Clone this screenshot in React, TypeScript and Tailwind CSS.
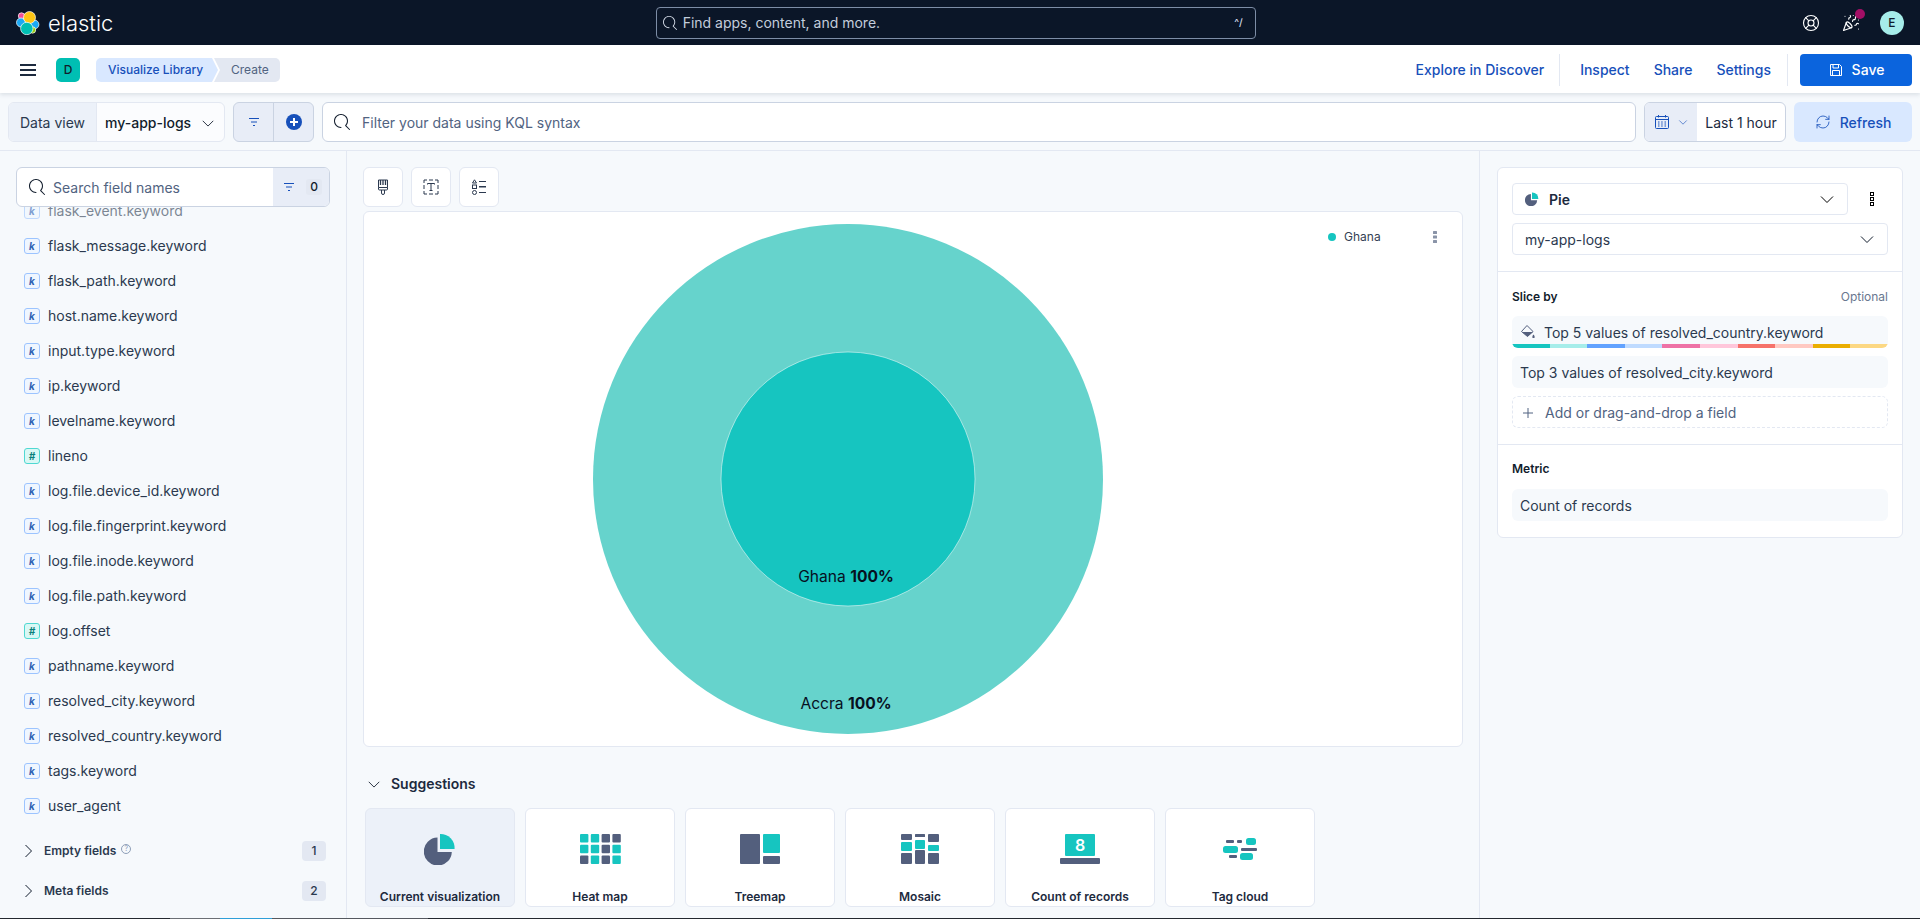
import { LifeBuoy, PartyPopper, RefreshCw } from "lucide-react";

const FIELDS: { name: string; type: "k" | "#" }[] = [
  { name: "flask_event.keyword", type: "k" },
  { name: "flask_message.keyword", type: "k" },
  { name: "flask_path.keyword", type: "k" },
  { name: "host.name.keyword", type: "k" },
  { name: "input.type.keyword", type: "k" },
  { name: "ip.keyword", type: "k" },
  { name: "levelname.keyword", type: "k" },
  { name: "lineno", type: "#" },
  { name: "log.file.device_id.keyword", type: "k" },
  { name: "log.file.fingerprint.keyword", type: "k" },
  { name: "log.file.inode.keyword", type: "k" },
  { name: "log.file.path.keyword", type: "k" },
  { name: "log.offset", type: "#" },
  { name: "pathname.keyword", type: "k" },
  { name: "resolved_city.keyword", type: "k" },
  { name: "resolved_country.keyword", type: "k" },
  { name: "tags.keyword", type: "k" },
  { name: "user_agent", type: "k" },
];

const PALETTE = [
  "bg-[#16c5c0]",
  "bg-[#a6edea]",
  "bg-[#61a2ff]",
  "bg-[#bfdbff]",
  "bg-[#ee72a6]",
  "bg-[#ffc7db]",
  "bg-[#f6726a]",
  "bg-[#ffc9c2]",
  "bg-[#eaae01]",
  "bg-[#fcd883]",
];

const DARK = "#535f7d";
const TEAL = "#16c5c0";

function SearchIcon({ size = 16, className = "text-[#111c2c]" }: { size?: number; className?: string }) {
  return (
    <svg width={size} height={size} viewBox="0 0 16 16" fill="currentColor" className={`shrink-0 ${className}`}>
      <path d="M11.271 11.978l3.872 3.873a.502.502 0 00.708 0 .502.502 0 000-.708l-3.565-3.564c2.38-2.747 2.267-6.923-.342-9.532-2.73-2.73-7.17-2.73-9.898 0-2.728 2.729-2.728 7.17 0 9.9a6.955 6.955 0 004.949 2.05.5.5 0 000-1 5.96 5.96 0 01-4.242-1.757 6.01 6.01 0 010-8.486c2.337-2.34 6.143-2.34 8.484 0a6.01 6.01 0 010 8.486.5.5 0 00.034.738z" />
    </svg>
  );
}

function ChevronDown({ size = 16, className = "text-[#111c2c]" }: { size?: number; className?: string }) {
  return (
    <svg width={size} height={size} viewBox="0 0 16 16" fill="none" stroke="currentColor" className={`shrink-0 ${className}`}>
      <path d="M2 5.5l6 6 6-6" />
    </svg>
  );
}

function ChevronRight() {
  return (
    <svg width="16" height="16" viewBox="0 0 16 16" fill="none" stroke="currentColor" className="-ml-1 shrink-0 text-[#111c2c]">
      <path d="M5.5 2l6 6-6 6" />
    </svg>
  );
}

function FilterIcon() {
  return (
    <svg width="16" height="16" viewBox="0 0 16 16" fill="none" stroke="currentColor" className="shrink-0 text-[#1750ba]">
      <path d="M3 4.5h10M5 8h6M7 11.5h2" />
    </svg>
  );
}

function BoxesVertical({ className = "text-[#111c2c]" }: { className?: string }) {
  return (
    <svg width="16" height="16" viewBox="0 0 16 16" fill="none" stroke="currentColor" className={`shrink-0 ${className}`}>
      <rect x="6.5" y="1.5" width="3" height="3" />
      <rect x="6.5" y="6.5" width="3" height="3" />
      <rect x="6.5" y="11.5" width="3" height="3" />
    </svg>
  );
}

function ElasticLogo() {
  return (
    <svg width="24" height="24" viewBox="0 0 24 24" className="shrink-0">
      <circle cx="5.5" cy="5" r="3.2" fill="#f04e98" stroke="#fff" strokeWidth="0.7" />
      <circle cx="18.5" cy="13.5" r="4.4" fill="#1ba9f5" stroke="#fff" strokeWidth="0.7" />
      <circle cx="16.5" cy="19" r="3.2" fill="#93c90e" stroke="#fff" strokeWidth="0.7" />
      <circle cx="5" cy="11.5" r="4.5" fill="#1ba9f5" stroke="#fff" strokeWidth="0.7" />
      <circle cx="13.5" cy="6.5" r="6" fill="#fec514" stroke="#fff" strokeWidth="0.7" />
      <circle cx="10.8" cy="17.5" r="6.2" fill="#00bfb3" stroke="#fff" strokeWidth="0.7" />
    </svg>
  );
}

function PieGlyph({ size }: { size: number }) {
  return (
    <svg width={size} height={size} viewBox="0 0 32 32" className="shrink-0">
      <path d="M13.5 4.5v14.4h14.3A14 14 0 1 1 13.5 4.5z" fill={DARK} />
      <path d="M16 1a14 14 0 0 1 14.6 15H16z" fill={TEAL} />
    </svg>
  );
}

function HeatMapGlyph() {
  const pattern = [1, 1, 0, 0, 1, 1, 0, 1, 0, 1, 0, 1];
  return (
    <svg width="41" height="30" viewBox="0 0 41 30">
      {pattern.map((on, i) => (
        <rect
          key={i}
          x={(i % 4) * 10.8}
          y={Math.floor(i / 4) * 10.8}
          width="8.4"
          height="8.4"
          rx="1"
          fill={on ? TEAL : DARK}
        />
      ))}
    </svg>
  );
}

function TreemapGlyph() {
  return (
    <svg width="40" height="30" viewBox="0 0 40 30">
      <rect x="0" y="0" width="20" height="30" rx="1" fill={DARK} />
      <rect x="23" y="0" width="17" height="19" rx="1" fill={TEAL} />
      <rect x="23" y="22" width="17" height="8" rx="1" fill={DARK} />
    </svg>
  );
}

function MosaicGlyph() {
  return (
    <svg width="38" height="30" viewBox="0 0 38 30">
      <rect x="0" y="0" width="11" height="6" rx="1" fill={DARK} />
      <rect x="0" y="8" width="11" height="9" rx="1" fill={TEAL} />
      <rect x="0" y="19" width="11" height="11" rx="1" fill={DARK} />
      <rect x="14" y="0" width="10" height="3" rx="0.5" fill={DARK} />
      <rect x="14" y="6" width="10" height="9" rx="1" fill={TEAL} />
      <rect x="14" y="16" width="10" height="14" rx="1" fill={DARK} />
      <rect x="27" y="0" width="11" height="8" rx="1" fill={DARK} />
      <rect x="27" y="11" width="11" height="6" rx="1" fill={TEAL} />
      <rect x="27" y="19" width="11" height="11" rx="1" fill={DARK} />
    </svg>
  );
}

function CountGlyph() {
  return (
    <svg width="40" height="30" viewBox="0 0 40 30">
      <rect x="5" y="0" width="30" height="22" rx="1" fill={TEAL} />
      <rect x="0" y="24" width="40" height="6" rx="1" fill={DARK} />
      <text x="20" y="17" textAnchor="middle" fontSize="16" fontWeight="600" fill="#fff" fontFamily="Inter, sans-serif">
        8
      </text>
    </svg>
  );
}

function TagCloudGlyph() {
  return (
    <svg width="34" height="22" viewBox="0 0 34 22">
      <rect x="3" y="2" width="8" height="3" rx="1" fill={DARK} />
      <rect x="14" y="2" width="5" height="3" rx="1" fill={DARK} />
      <rect x="23" y="0" width="10" height="7" rx="2.5" fill={TEAL} />
      <rect x="0" y="8" width="15" height="7" rx="2.5" fill={TEAL} />
      <rect x="18" y="10" width="16" height="3" rx="1" fill={DARK} />
      <rect x="6" y="17" width="8" height="3" rx="1" fill={DARK} />
      <rect x="17" y="15" width="13" height="7" rx="2.5" fill={TEAL} />
    </svg>
  );
}

const SUGGESTIONS = [
  { label: "Current visualization", icon: <PieGlyph size={32} />, active: true },
  { label: "Heat map", icon: <HeatMapGlyph />, active: false },
  { label: "Treemap", icon: <TreemapGlyph />, active: false },
  { label: "Mosaic", icon: <MosaicGlyph />, active: false },
  { label: "Count of records", icon: <CountGlyph />, active: false },
  { label: "Tag cloud", icon: <TagCloudGlyph />, active: false },
];

function FieldIcon({ type }: { type: "k" | "#" }) {
  const tone =
    type === "k"
      ? "border-[#9cc4ff] bg-[#eff6ff] text-[#2f63b3]"
      : "border-[#4fd8d2] bg-[#d9f8f5] text-[#0b7f7b]";
  return (
    <span className={`flex h-4 w-4 shrink-0 items-center justify-center rounded-[3px] border text-[10px] font-bold italic leading-none ${tone}`}>
      {type}
    </span>
  );
}

function TopBar() {
  return (
    <header className="flex h-[45px] shrink-0 items-center bg-[#0b1628] pl-4 pr-4">
      <ElasticLogo />
      <span className="ml-[8px] text-[22px] font-light leading-none text-white">elastic</span>
      <div className="mx-auto flex h-8 w-[600px] -translate-x-[2px] items-center gap-[6px] rounded-[4px] border border-[#7d8da6] bg-[#0b1628] pl-[6px] pr-3">
        <SearchIcon size={14} className="text-[#d5dce8]" />
        <span className="text-sm text-[#c3cddc]">Find apps, content, and more.</span>
        <span className="ml-auto text-[10px] font-medium text-[#d5dce8]">^/</span>
      </div>
      <div className="flex items-center">
        <LifeBuoy size={18} strokeWidth={1.5} className="text-white" />
        <div className="relative ml-[22px] mr-[20px]">
          <PartyPopper size={18} strokeWidth={1.5} className="text-white" />
          <span className="absolute -right-[5px] -top-[5px] h-[10px] w-[10px] rounded-full bg-[#a30f66]" />
        </div>
        <span className="flex h-6 w-6 items-center justify-center rounded-full bg-[#a6edea] text-xs font-medium text-[#111c2c]">
          E
        </span>
      </div>
    </header>
  );
}

function NavBar() {
  return (
    <nav className="relative z-20 flex h-12 shrink-0 items-center bg-white pl-5 pr-2 pt-[2px] shadow-[0_2px_4px_rgba(43,57,79,0.12)]">
      <div className="flex h-4 w-4 flex-col justify-between py-[2px]">
        <span className="h-[2px] bg-[#1d2a3e]" />
        <span className="h-[2px] bg-[#1d2a3e]" />
        <span className="h-[2px] bg-[#1d2a3e]" />
      </div>
      <span className="ml-5 flex h-6 w-6 items-center justify-center rounded-[5px] bg-[#00bfb3] text-xs font-medium text-[#111c2c]">
        D
      </span>
      <div className="ml-4 flex h-6 text-xs">
        <span className="flex w-[122px] items-center rounded-l-[5px] bg-[#d9e8ff] pl-3 font-medium text-[#1750ba] [clip-path:polygon(0_0,116px_0,100%_50%,116px_100%,0_100%)]">
          Visualize Library
        </span>
        <span className="-ml-[4px] flex w-[66px] items-center rounded-r-[5px] bg-[#e3e8f2] pl-[17px] text-[#516381] [clip-path:polygon(0_0,100%_0,100%_100%,0_100%,6px_50%)]">
          Create
        </span>
      </div>
      <div className="ml-auto flex items-center text-sm font-medium text-[#1750ba]">
        <span>Explore in Discover</span>
        <span className="mx-[15px] h-8 w-px bg-[#e3e8f2]" />
        <span className="ml-[5px]">Inspect</span>
        <span className="ml-6">Share</span>
        <span className="ml-6">Settings</span>
        <span className="ml-4 mr-3 h-8 w-px bg-[#e3e8f2]" />
        <button className="flex h-8 w-28 items-center justify-center gap-2 rounded-[4px] bg-[#0b64dd] font-medium text-white">
          <svg width="16" height="16" viewBox="0 0 16 16" fill="none" stroke="currentColor">
            <path d="M2.5 2.5h9l2 2v9h-11z" />
            <path d="M5 2.5v3.5h5.5v-3.5M4.5 13.5v-5h7v5" />
          </svg>
          Save
        </button>
      </div>
    </nav>
  );
}

function FilterBar() {
  return (
    <div className="flex h-[58px] shrink-0 items-start gap-2 border-b border-[#e3e8f2] bg-[#f6f9fc] pl-2 pr-2 pt-[9px] text-sm">
      <div className="flex h-10 w-[217px] items-stretch overflow-hidden rounded-md border border-[#e3e8f2] bg-white/50">
        <span className="flex w-[88px] items-center justify-center border-r border-[#e3e8f2] bg-[#ecf1f9] pt-px text-[#2b394f]">
          Data view
        </span>
        <span className="flex flex-1 items-center gap-[10px] pl-2 pt-px font-medium text-[#111c2c]">
          my-app-logs
          <ChevronDown size={14} />
        </span>
      </div>
      <div className="flex h-10 w-[81px] overflow-hidden rounded-md border border-[#cad3e2] bg-[#e8edf7]">
        <span className="flex w-10 items-center justify-center border-r border-[#cad3e2]">
          <FilterIcon />
        </span>
        <span className="flex flex-1 items-center justify-center">
          <span className="relative flex h-4 w-4 items-center justify-center rounded-full bg-[#1750ba]">
            <span className="absolute h-[2px] w-2 bg-white" />
            <span className="absolute h-2 w-[2px] bg-white" />
          </span>
        </span>
      </div>
      <div className="flex h-10 flex-1 items-center gap-3 rounded-md border border-[#cad3e2] bg-white pl-[11px]">
        <SearchIcon />
        <span className="pt-px text-[#516381]">Filter your data using KQL syntax</span>
      </div>
      <div className="flex h-10 w-[142px] overflow-hidden rounded-md border border-[#cad3e2] bg-white">
        <span className="flex w-[52px] items-center gap-[8px] bg-[#e8edf7] pl-[9px]">
          <svg width="16" height="16" viewBox="0 0 16 16" fill="none" stroke="#1750ba" className="shrink-0">
            <rect x="1.5" y="2.5" width="13" height="12" rx="1" />
            <path d="M1.5 5.5h13M4.5 1v2.5M11.5 1v2.5" />
            <path d="M4 8h1.5M7.2 8h1.5M10.5 8h1.5M4 10h1.5M7.2 10h1.5M10.5 10h1.5M4 12h1.5M7.2 12h1.5M10.5 12h1.5" />
          </svg>
          <ChevronDown size={10} className="text-[#1750ba]" />
        </span>
        <span className="flex flex-1 items-center justify-center pt-px text-[#1d2a3e]">Last 1 hour</span>
      </div>
      <button className="flex h-10 w-[118px] items-center justify-center gap-[9px] rounded-md bg-[#d9e8ff] font-medium text-[#1750ba]">
        <RefreshCw size={16} strokeWidth={1.25} />
        <span className="pt-px">Refresh</span>
      </button>
    </div>
  );
}

function Sidebar() {
  return (
    <aside className="flex w-[347px] shrink-0 flex-col border-r border-[#e3e8f2]">
      <div className="relative z-10 px-4 pt-4">
        <div className="flex h-10 overflow-hidden rounded-md border border-[#cad3e2] bg-white">
          <div className="flex flex-1 items-center gap-2 pl-[12px]">
            <SearchIcon />
            <span className="pt-px text-sm text-[#516381]">Search field names</span>
          </div>
          <div className="flex w-14 items-center gap-[9px] bg-[#e8edf7] pl-2">
            <FilterIcon />
            <span className="flex h-4 w-4 items-center justify-center rounded-[3px] bg-[#e3e8f2] text-xs font-medium text-[#111c2c]">
              0
            </span>
          </div>
        </div>
      </div>
      <div className="min-h-0 flex-1 overflow-hidden">
        <ul className="-mt-[14px] px-6">
          {FIELDS.map((field, i) => (
            <li key={field.name} className={`flex h-[35px] items-center gap-2 text-sm text-[#2b394f] ${i === 0 ? "opacity-60" : ""}`}>
              <FieldIcon type={field.type} />
              {field.name}
            </li>
          ))}
        </ul>
      </div>
      <div className="px-6 pb-[7px]">
        <div className="flex h-10 items-center">
          <ChevronRight />
          <span className="ml-2 text-xs font-semibold text-[#2b394f]">Empty fields</span>
          <span className="-mt-[5px] ml-[5px] flex h-[10px] w-[10px] items-center justify-center rounded-full border border-[#8e9fb8] text-[7px] leading-none text-[#8e9fb8]">
            ?
          </span>
          <span className="ml-auto -mr-[4px] flex h-5 w-6 items-center justify-center rounded-[4px] bg-[#e3e8f2] text-xs font-medium text-[#2b394f]">
            1
          </span>
        </div>
        <div className="flex h-10 items-center">
          <ChevronRight />
          <span className="ml-2 text-xs font-semibold text-[#2b394f]">Meta fields</span>
          <span className="ml-auto -mr-[4px] flex h-5 w-6 items-center justify-center rounded-[4px] bg-[#e3e8f2] text-xs font-medium text-[#2b394f]">
            2
          </span>
        </div>
      </div>
    </aside>
  );
}

function ToolButton({ children }: { children: React.ReactNode }) {
  return (
    <button className="flex h-10 w-10 items-center justify-center rounded-md border border-[#e3e8f2] bg-white text-[#2b394f]">
      {children}
    </button>
  );
}

function Workspace() {
  return (
    <main className="flex min-w-0 flex-1 flex-col px-4 pt-4">
      <div className="flex gap-2">
        <ToolButton>
          <svg width="16" height="16" viewBox="0 0 16 16" fill="none" stroke="currentColor">
            <path d="M3.5 1h9v7.5h-9z" />
            <path d="M5.5 1v5M8 1v5M10.5 1v5" strokeWidth="1.3" />
            <path d="M3.5 8.5v1.5a1 1 0 001 1h7a1 1 0 001-1V8.5" />
            <path d="M6.5 11v3a1.5 1.5 0 003 0v-3" />
          </svg>
        </ToolButton>
        <ToolButton>
          <svg width="16" height="16" viewBox="0 0 16 16" fill="none" stroke="currentColor">
            <path d="M1 4V1h3M6 1h4M12 1h3v3M15 6v4M15 12v3h-3M10 15H6M4 15H1v-3M1 10V6" />
            <path d="M4.5 5.5V4.5h7v1M8 4.5v7M6.5 11.5h3" />
          </svg>
        </ToolButton>
        <ToolButton>
          <svg width="16" height="16" viewBox="0 0 16 16" fill="none" stroke="currentColor">
            <path d="M3.5 .8L5.5 4h-4z" />
            <rect x="1.5" y="6" width="4" height="3.5" />
            <circle cx="3.5" cy="13.5" r="2" />
            <path d="M8 2.5h7" />
            <path d="M8 7.75h7" strokeWidth="1.5" />
            <path d="M8 13.5h7" />
          </svg>
        </ToolButton>
      </div>
      <section className="mt-1 flex min-h-0 flex-1 rounded-md border border-[#e3e8f2] bg-white">
        <div className="flex min-w-0 flex-1 items-center justify-center">
          <svg width="512" height="512" viewBox="0 0 512 512" className="shrink-0" fontFamily="Inter, sans-serif">
            <circle cx="256" cy="256" r="255" fill="#66d3cc" />
            <circle cx="256" cy="256" r="127" fill="#16c5c0" stroke="#fff" strokeWidth="0.5" />
            <text x="254" y="355" textAnchor="middle" dominantBaseline="middle" fontSize="15.6" fill="#07101f">
              Ghana <tspan fontWeight="700">100%</tspan>
            </text>
            <text x="254" y="482" textAnchor="middle" dominantBaseline="middle" fontSize="15.6" fill="#07101f">
              Accra <tspan fontWeight="700">100%</tspan>
            </text>
          </svg>
        </div>
        <div className="flex h-[50px] w-[130px] shrink-0 items-center text-xs text-[#343f54]">
          <span className="-ml-[4px] h-2 w-2 rounded-full bg-[#16c5c0]" />
          <span className="ml-2">Ghana</span>
          <svg width="4" height="12" viewBox="0 0 4 12" className="ml-auto mr-[25px] shrink-0" fill="#8a94a8">
            <rect x="0" y="0" width="4" height="3" rx="0.5" />
            <rect x="0" y="4.5" width="4" height="3" rx="0.5" />
            <rect x="0" y="9" width="4" height="3" rx="0.5" />
          </svg>
        </div>
      </section>
      <div className="flex h-[49px] shrink-0 items-end">
        <div className="flex h-6 items-center gap-[10px] pl-1">
          <ChevronDown size={14} />
          <span className="text-sm font-semibold text-[#1d2a3e]">Suggestions</span>
        </div>
      </div>
      <div className="mb-[11px] mt-3 flex gap-[10px] pl-[2px]">
        {SUGGESTIONS.map((s) => (
          <div
            key={s.label}
            className={`flex h-[99px] w-[150px] flex-col items-center rounded-md border border-[#e3e8f2] ${s.active ? "bg-[#ecf1f9]" : "bg-white"}`}
          >
            <div className="flex h-[80px] shrink-0 items-center justify-center">{s.icon}</div>
            <span className="text-xs font-semibold text-[#1d2a3e]">{s.label}</span>
          </div>
        ))}
      </div>
    </main>
  );
}

function ConfigPanel() {
  return (
    <aside className="w-[441px] shrink-0 border-l border-[#e3e8f2] px-[17px] pt-4">
      <div className="rounded-md border border-[#e3e8f2] bg-white">
        <div className="flex flex-col gap-2 px-[14px] pb-4 pt-[15px]">
          <div className="flex items-center">
            <div className="flex h-8 w-[336px] items-center rounded-[4px] border border-[#e3e8f2] pl-[12px] pr-[12px]">
              <PieGlyph size={14} />
              <span className="ml-[10px] pt-px text-sm font-semibold text-[#1d2a3e]">Pie</span>
              <ChevronDown className="ml-auto" />
            </div>
            <BoxesVertical className="ml-4" />
          </div>
          <div className="flex h-8 items-center justify-between rounded-[4px] border border-[#e3e8f2] pl-[12px] pr-[12px] text-sm text-[#2b394f]">
            <span className="pt-px">my-app-logs</span>
            <ChevronDown />
          </div>
        </div>
        <div className="border-t border-[#e3e8f2] px-[14px] pb-4 pt-[17px]">
          <div className="flex items-center justify-between text-xs">
            <span className="font-semibold text-[#111c2c]">Slice by</span>
            <span className="text-[#69778f]">Optional</span>
          </div>
          <div className="relative mt-[11px] flex h-8 items-center gap-2 overflow-hidden rounded-md bg-[#f6f9fc] pl-2 text-sm text-[#2b394f]">
            <svg width="16" height="16" viewBox="0 0 16 16" className="shrink-0 text-[#535f7d]" fill="currentColor">
              <path d="M7 1.5l6 6-5.5 5L1.5 7.5z" fill="none" stroke="currentColor" />
              <path d="M2 8h11l-5.5 4.5z" />
              <path d="M13.5 10.5c.8 1 1.2 1.8 1.2 2.4a1.2 1.2 0 01-2.4 0c0-.6.4-1.4 1.2-2.4z" />
            </svg>
            <span className="pt-px">Top 5 values of resolved_country.keyword</span>
            <div className="absolute inset-x-0 bottom-0 flex h-1">
              {PALETTE.map((color) => (
                <span key={color} className={`flex-1 ${color}`} />
              ))}
            </div>
          </div>
          <div className="mt-2 flex h-8 items-center rounded-md bg-[#f6f9fc] pl-2 pt-px text-sm text-[#2b394f]">
            Top 3 values of resolved_city.keyword
          </div>
          <div className="mt-2 flex h-8 items-center gap-[11px] rounded-md border border-dashed border-[#e3e8f2] pl-[9px] pt-px text-sm text-[#516381]">
            <svg width="12" height="12" viewBox="0 0 12 12" stroke="currentColor" fill="none" className="shrink-0">
              <path d="M6 1v10M1 6h10" />
            </svg>
            Add or drag-and-drop a field
          </div>
        </div>
        <div className="border-t border-[#e3e8f2] px-[14px] pb-4 pt-4">
          <div className="text-xs font-semibold text-[#111c2c]">Metric</div>
          <div className="mt-3 flex h-8 items-center rounded-md bg-[#f6f9fc] pl-2 pt-px text-sm text-[#2b394f]">
            Count of records
          </div>
        </div>
      </div>
    </aside>
  );
}

export default function App() {
  return (
    <div className="flex h-screen w-full flex-col overflow-hidden bg-[#f6f9fc] font-['Inter',sans-serif]">
      <TopBar />
      <NavBar />
      <FilterBar />
      <div className="flex min-h-0 flex-1">
        <Sidebar />
        <Workspace />
        <ConfigPanel />
      </div>
      {/* taskbar sliver at the very bottom of the capture */}
      <div className="flex h-px shrink-0 bg-[#23282f]">
        <span className="ml-[170px] w-[50px] bg-[#6b6f75]" />
        <span className="w-[52px] bg-[#2e9fd8]" />
        <span className="w-[156px] bg-[#55595f]" />
      </div>
    </div>
  );
}
